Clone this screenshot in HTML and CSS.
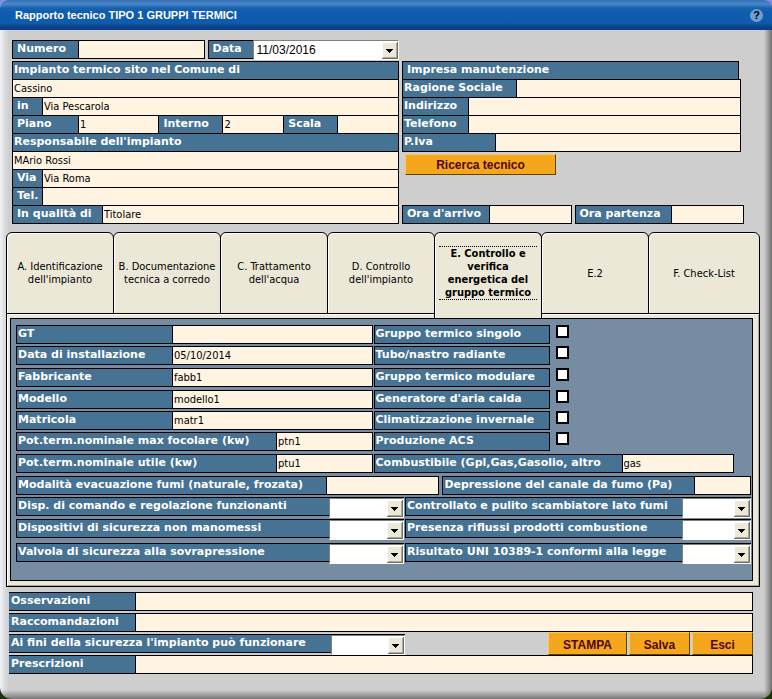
FILE: index.html
```html
<!DOCTYPE html>
<html lang="it">
<head>
    <meta charset="UTF-8">
    <meta name="viewport" content="width=device-width, initial-scale=1.0">
    <title>Rapporto tecnico TIPO 1 GRUPPI TERMICI</title>
    <link rel="stylesheet" href="styles.css">
</head>
<body>
    <div class="window">
        <header class="title-bar">
            <h1>Rapporto tecnico TIPO 1 GRUPPI TERMICI</h1>
            <button type="button" class="help">?</button>
        </header>
        <form class="content">
            <div class="top">
                <div class="left-col">
                    <div class="line">
                        <div class="field numero"><label class="w66" for="numero">Numero</label><input type="text" id="numero"></div>
                        <div class="field data"><label class="w45" for="data">Data</label><select id="data" class="combo"><option>11/03/2016</option></select></div>
                    </div>
                    <div class="stack">
                        <div class="field head"><label for="comune">Impianto termico sito nel Comune di</label></div>
                        <div class="field"><input type="text" id="comune" value="Cassino"></div>
                        <div class="field"><label class="w30" for="indirizzo">in</label><input type="text" id="indirizzo" value="Via Pescarola"></div>
                        <div class="field">
                            <label class="w66" for="piano">Piano</label><input class="grow-4" type="text" id="piano" value="1">
                            <label class="w64" for="interno">Interno</label><input class="grow-3" type="text" id="interno" value="2">
                            <label class="w54" for="scala">Scala</label><input class="grow-3" type="text" id="scala">
                        </div>
                        <div class="field head"><label for="responsabile">Responsabile dell'impianto</label></div>
                        <div class="field"><input type="text" id="responsabile" value="MArio Rossi"></div>
                        <div class="field"><label class="w30" for="via">Via</label><input type="text" id="via" value="Via Roma"></div>
                        <div class="field"><label class="w30" for="tel">Tel.</label><input type="text" id="tel"></div>
                        <div class="field"><label class="w90" for="qualita">In qualità di</label><input type="text" id="qualita" value="Titolare"></div>
                    </div>
                </div>
                <div class="right-col">
                    <div class="stack tight impresa">
                        <div class="field head"><h2>Impresa manutenzione</h2></div>
                        <div class="field"><label class="w114" for="ragione">Ragione Sociale</label><input type="text" id="ragione"></div>
                        <div class="field"><label class="w66" for="indirizzo-impresa">Indirizzo</label><input type="text" id="indirizzo-impresa"></div>
                        <div class="field"><label class="w66" for="telefono">Telefono</label><input type="text" id="telefono"></div>
                        <div class="field"><label class="w93" for="piva">P.Iva</label><input type="text" id="piva"></div>
                    </div>
                    <button type="button" class="btn ricerca">Ricerca tecnico</button>
                    <div class="line ore">
                        <div class="field"><label class="w87" for="arrivo">Ora d'arrivo</label><input type="text" id="arrivo"></div>
                        <div class="field"><label class="w96" for="partenza">Ora partenza</label><input type="text" id="partenza"></div>
                    </div>
                </div>
            </div>

            <div class="tabs" role="tablist">
                <button type="button" class="tab" role="tab"><span>A. Identificazione dell'impianto</span></button>
                <button type="button" class="tab" role="tab"><span>B. Documentazione tecnica a corredo</span></button>
                <button type="button" class="tab" role="tab"><span>C. Trattamento dell'acqua</span></button>
                <button type="button" class="tab" role="tab"><span>D. Controllo dell'impianto</span></button>
                <button type="button" class="tab active" role="tab" aria-selected="true"><span>E. Controllo e verifica energetica del gruppo termico</span></button>
                <button type="button" class="tab" role="tab"><span>E.2</span></button>
                <button type="button" class="tab" role="tab"><span>F. Check-List</span></button>
            </div>

            <div class="panel" role="tabpanel">
                <div class="panel-inner tight">
                    <div class="group">
                        <div class="row dati">
                            <div class="field"><label class="w156" for="gt">GT</label><input type="text" id="gt"></div>
                            <div class="field"><label for="singolo">Gruppo termico singolo</label></div>
                            <input type="checkbox" id="singolo">
                        </div>
                        <div class="row dati">
                            <div class="field"><label class="w156" for="installazione">Data di installazione</label><input type="text" id="installazione" value="05/10/2014"></div>
                            <div class="field"><label for="tubo">Tubo/nastro radiante</label></div>
                            <input type="checkbox" id="tubo">
                        </div>
                    </div>
                    <div class="group">
                        <div class="row dati">
                            <div class="field"><label class="w156" for="fabbricante">Fabbricante</label><input type="text" id="fabbricante" value="fabb1"></div>
                            <div class="field"><label for="modulare">Gruppo termico modulare</label></div>
                            <input type="checkbox" id="modulare">
                        </div>
                    </div>
                    <div class="group">
                        <div class="row dati">
                            <div class="field"><label class="w156" for="modello">Modello</label><input type="text" id="modello" value="modello1"></div>
                            <div class="field"><label for="generatore">Generatore d'aria calda</label></div>
                            <input type="checkbox" id="generatore">
                        </div>
                        <div class="row dati">
                            <div class="field"><label class="w156" for="matricola">Matricola</label><input type="text" id="matricola" value="matr1"></div>
                            <div class="field"><label for="climatizzazione">Climatizzazione invernale</label></div>
                            <input type="checkbox" id="climatizzazione">
                        </div>
                        <div class="row dati">
                            <div class="field"><label class="w260" for="focolare">Pot.term.nominale max focolare (kw)</label><input type="text" id="focolare" value="ptn1"></div>
                            <div class="field"><label for="acs">Produzione ACS</label></div>
                            <input type="checkbox" id="acs">
                        </div>
                    </div>
                    <div class="group">
                        <div class="row utile">
                            <div class="field"><label class="w260" for="utile">Pot.term.nominale utile (kw)</label><input type="text" id="utile" value="ptu1"></div>
                            <div class="field"><label class="w248" for="combustibile">Combustibile (Gpl,Gas,Gasolio, altro</label><input type="text" id="combustibile" value="gas"></div>
                        </div>
                    </div>
                    <div class="group">
                        <div class="row fumi">
                            <div class="field"><label class="w310" for="evacuazione">Modalità evacuazione fumi (naturale, frozata)</label><input type="text" id="evacuazione"></div>
                            <div class="field"><label class="w252" for="depressione">Depressione del canale da fumo (Pa)</label><input type="text" id="depressione"></div>
                        </div>
                        <div class="row verifiche">
                            <div class="field"><label class="w312" for="disp">Disp. di comando e regolazione funzionanti</label><select id="disp" class="combo"><option></option></select></div>
                            <div class="field"><label class="w276" for="scambiatore">Controllato e pulito scambiatore lato fumi</label><select id="scambiatore" class="combo"><option></option></select></div>
                        </div>
                    </div>
                    <div class="group wide">
                        <div class="row verifiche">
                            <div class="field"><label class="w312" for="dispositivi">Dispositivi di sicurezza non manomessi</label><select id="dispositivi" class="combo"><option></option></select></div>
                            <div class="field"><label class="w276" for="riflussi">Presenza riflussi prodotti combustione</label><select id="riflussi" class="combo"><option></option></select></div>
                        </div>
                        <div class="row verifiche">
                            <div class="field"><label class="w312" for="valvola">Valvola di sicurezza alla sovrapressione</label><select id="valvola" class="combo"><option></option></select></div>
                            <div class="field"><label class="w276" for="risultato">Risultato UNI 10389-1 conformi alla legge</label><select id="risultato" class="combo"><option></option></select></div>
                        </div>
                    </div>
                </div>
            </div>

            <div class="notes tight">
                <div class="field"><label class="w126" for="osservazioni">Osservazioni</label><input type="text" id="osservazioni"></div>
                <div class="field"><label class="w126" for="raccomandazioni">Raccomandazioni</label><input type="text" id="raccomandazioni"></div>
                <div class="actions">
                    <div class="field"><label for="funzionare">Ai fini della sicurezza l'impianto può funzionare</label><select id="funzionare" class="combo"><option></option></select></div>
                    <div class="buttons">
                        <button type="button" class="btn stampa">STAMPA</button>
                        <button type="submit" class="btn">Salva</button>
                        <button type="button" class="btn">Esci</button>
                    </div>
                </div>
                <div class="field"><label class="w126" for="prescrizioni">Prescrizioni</label><input type="text" id="prescrizioni"></div>
            </div>
        </form>
    </div>
</body>
</html>
```
FILE: styles.css
```css
* {
    box-sizing: border-box;
}
body {
    margin: 0;
    background: linear-gradient(#7b8fe8 50%, #1c3208 50%);
    font-family: "DejaVu Sans Condensed", "DejaVu Sans", sans-serif;
    font-size: 11px;
    color: #000;
}
button, input, select {
    font: inherit;
    color: inherit;
    margin: 0;
}
.window {
    min-height: 100vh;
    border-radius: 8px 8px 12px 12px;
    overflow: hidden;
    background:
        linear-gradient(transparent calc(100% - 9px), #777 100%),
        linear-gradient(90deg, #f0f2f6, #d8dade 5px, transparent 9px, transparent calc(100% - 8px), #707070 100%),
        #cecece;
}
.title-bar {
    display: flex;
    align-items: center;
    justify-content: space-between;
    height: 30px;
    padding: 0 9px 0 15px;
    background: linear-gradient(#3470b4, #4a88ca 4px, #1a62b0 8px, #0f5cae 12px, #0f5cae 23px, #0b3f86 27px, #0b3f86);
    color: #fff;
}
.title-bar h1 {
    margin: 0;
    font: bold 11px "Liberation Sans", Arial, sans-serif;
}
.help {
    width: 13px;
    height: 13px;
    padding: 0;
    border: 0;
    border-radius: 50%;
    background: #6f9fd4;
    color: #000;
    font: bold 11px/13px "Liberation Sans", Arial, sans-serif;
}
.content {
    padding: 10px 12px 24px 6px;
}

/* label + input pairs */
.field {
    display: flex;
    height: 19px;
    min-width: 0;
    border: 1px solid #000;
    background: #fff3e2;
}
.field label, .field h2 {
    flex: none;
    margin: 0;
    padding-left: 4px;
    background: #467294;
    color: #fff;
    font: bold 11px/15px "DejaVu Sans", Verdana, sans-serif;
    white-space: nowrap;
}
.tight .field label {
    padding-left: 1px;
}
.field label:only-child, .field h2 {
    flex: 1;
}
.head label {
    padding-left: 1px;
}
.field input {
    flex: 1;
    width: 0;
    min-width: 0;
    padding: 0 0 1px 1px;
    border: 0;
    background: #fff3e2;
}
.field label + input {
    border-left: 1px solid #000;
}
.field input + label {
    border-left: 1px solid #000;
}
.field .grow-4 {
    flex-grow: 4;
}
.field .grow-3 {
    flex-grow: 3;
}
.w30 { width: 29px; }
.w45 { width: 44px; }
.w54 { width: 54px; }
.w64 { width: 64px; }
.w66 { width: 65px; }
.w87 { width: 86px; }
.w90 { width: 89px; }
.w93 { width: 92px; }
.w96 { width: 95px; }
.w114 { width: 113px; }
.w126 { width: 126px; }
.w156 { width: 155px; }
.w248 { width: 247px; }
.w252 { width: 251px; }
.w260 { width: 259px; }
.w276 { width: 276px; }
.w310 { width: 309px; }
.w312 { width: 312px; }

.combo {
    appearance: none;
    flex: 1;
    min-width: 0;
    height: 20px;
    padding: 0 18px 0 3px;
    border: 1px solid;
    border-color: #85806f #fff #fff #85806f;
    border-radius: 0;
    background: #fff url("data:image/svg+xml,%3Csvg xmlns='http://www.w3.org/2000/svg' width='16' height='17' shape-rendering='crispEdges'%3E%3Cpath fill='%23716f64' d='M0 0h16v17H0z'/%3E%3Cpath fill='%23fff' d='M0 0h15v16H0z'/%3E%3Cpath fill='%23aca899' d='M1 1h14v15H1z'/%3E%3Cpath fill='%23ece9d8' d='M1 1h13v14H1z'/%3E%3Cpath d='M4 7h7v1H4zM5 8h5v1H5zM6 9h3v1H6zM7 10h1v1H7z'/%3E%3C/svg%3E") no-repeat right 0 top 1px;
}

/* header data */
.top {
    display: grid;
    grid-template-columns: 387fr 342fr;
    gap: 3px;
    padding: 0 16px 0 6px;
}
.line {
    display: flex;
    gap: 3px;
}
.numero {
    flex: 192;
}
.data {
    flex: 192;
    border-right: 0;
}
.data .combo {
    margin-top: -1px;
    font: 12px "Liberation Sans", Arial, sans-serif;
}
.left-col .stack {
    margin-top: 2px;
}
.stack .field + .field {
    margin-top: -1px;
}
.right-col {
    display: flex;
    flex-direction: column;
    padding-top: 21px;
}
.impresa {
    padding-right: 3px;
}
.impresa .head {
    margin-right: 2px;
}
.btn {
    min-width: 61px;
    height: 23px;
    padding: 2px 0 0;
    border: 1px solid;
    border-color: #f9c765 #5c4410 #5c4410 #f9c765;
    background: #f4a61c;
    color: #4e0808;
    font: bold 12px "Liberation Sans", Arial, sans-serif;
}
.ricerca {
    width: 151px;
    height: 21px;
    margin: 2px 0 0 3px;
    padding: 0;
}
.ore {
    margin-top: auto;
}
.ore .field {
    flex: 1;
}

/* tabs */
.tabs {
    display: grid;
    grid-template-columns: repeat(6, 107fr) 112fr;
    margin-top: 8px;
}
.tab {
    height: 82px;
    margin-right: -1px;
    padding: 0 4px;
    border: 1px solid #000;
    border-radius: 6px 6px 0 0;
    background: #ebe8d7;
    box-shadow: inset 1px 1px #fff;
    line-height: 13px;
}
.tab:last-child {
    margin-right: 0;
}
.tab span {
    display: block;
}
.tab.active {
    position: relative;
    z-index: 1;
    height: 86px;
    margin-bottom: -4px;
    padding-bottom: 5px;
    border-bottom: 0;
    font-weight: bold;
}
.tab.active span {
    border-top: 1px dotted #000;
    border-bottom: 1px dotted #000;
}

.panel {
    margin-top: -1px;
    border: 1px solid #000;
    background: #ebe8d7;
    box-shadow: inset 1px 1px #fff, inset -1px -1px #aca899;
    padding: 4px 6px 5px 3px;
}
.panel-inner {
    display: flex;
    flex-direction: column;
    gap: 3px;
    padding: 6px 1px 18px 5px;
    border: 1px solid #000;
    background: #758ca3;
}
.group {
    display: grid;
    gap: 2px;
}
.group.wide {
    gap: 5px;
}
.row {
    display: grid;
}
.dati {
    grid-template-columns: 357fr 177fr 200fr;
    column-gap: 1px;
}
.dati input[type="checkbox"] {
    appearance: none;
    width: 13px;
    height: 13px;
    margin-left: 5px;
    border: 2px solid #000;
    background: #fff;
}
.dati input[type="checkbox"]:checked {
    background: #467294;
}
.utile {
    grid-template-columns: 357fr 361fr 16fr;
    column-gap: 1px;
}
.fumi {
    grid-template-columns: 424fr 309fr;
    column-gap: 3px;
}
.verifiche {
    grid-template-columns: 388fr 346fr;
    column-gap: 1px;
}
.verifiche .field {
    border-right: 0;
}

/* notes and buttons */
.notes {
    display: grid;
    gap: 2px;
    padding-left: 3px;
    margin-top: 5px;
    margin-right: 7px;
}
.notes .field {
    border-left: 0;
}
.notes .field label {
    padding-left: 2px;
}
.actions {
    display: flex;
    justify-content: space-between;
    height: 19px;
}
.actions .field {
    flex: 0 1 396px;
    border-right: 0;
}
.actions .field label {
    width: 322px;
}
.buttons {
    display: flex;
    gap: 2px;
    margin-top: -2px;
}
.btn.stampa {
    width: 79px;
}
```
